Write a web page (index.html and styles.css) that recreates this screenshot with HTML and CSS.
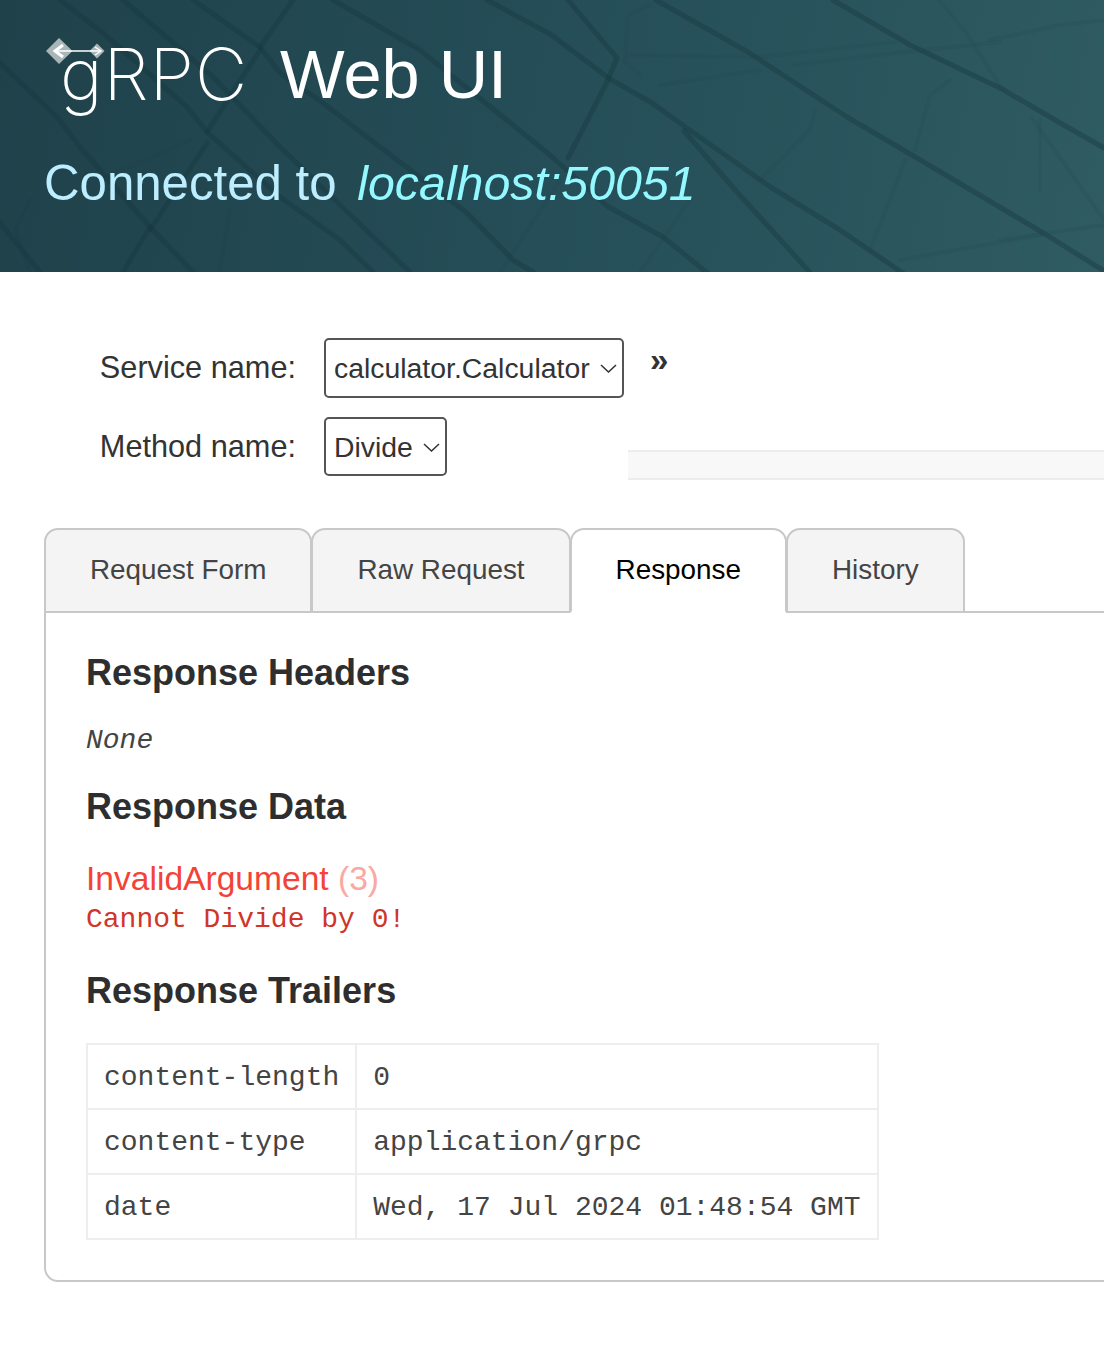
FILE: index.html
```html
<!DOCTYPE html>
<html lang="en">
<head>
<meta charset="utf-8">
<title>gRPC Web UI</title>
<link rel="stylesheet" href="styles.css">
</head>
<body>
<header class="hero">
  <svg class="hero-bg" viewBox="0 0 1104 272" preserveAspectRatio="none" aria-hidden="true">
    <g class="faint">
      <path d="M628 55 L760 57 L895 42"/>
      <path d="M795 65 L905 52 L1000 42"/>
      <path d="M628 15 L650 5 M628 15 L625 62 L640 75"/>
      <path d="M939 0 L967 34 L1002 89"/>
      <path d="M1031 117 L1104 220"/>
      <path d="M1000 240 L1104 225"/>
      <path d="M900 260 L1040 235"/>
      <path d="M870 250 L890 200 L905 160"/>
      <path d="M915 150 L930 95 L950 80"/>
      <path d="M990 40 L1060 25 L1104 20"/>
      <path d="M1040 120 L1040 190"/>
      <path d="M760 180 L810 130 L815 110"/>
      <path d="M660 85 L760 70"/>
      <path d="M100 180 L190 140"/>
      <path d="M30 200 L15 230 L30 272"/>
      <path d="M500 272 L560 180"/>
      <path d="M640 272 L690 200"/>
      <path d="M220 270 L230 210"/>
    </g>
    <g class="cracks">
      <path d="M487 0 L550 34 L610 79 L652 103 L691 131 L769 186 L840 230 L910 278"/>
      <path d="M656 0 L748 52 L847 117 L917 158 L1045 234 L1104 271"/>
      <path d="M833 0 L910 45 L1002 89 L1062 124 L1104 148"/>
      <path d="M333 0 L420 50 L550 155 L607 206 L663 237 L716 280"/>
      <path d="M568 0 L617 58 L607 82 L568 158"/>
      <path d="M684 131 L737 192 L815 278"/>
      <path d="M60 0 L103 33 L187 107 L207 132 L280 197 L340 240 L373 272"/>
      <path d="M123 0 L143 17 L213 77 L280 147 L363 227 L410 272"/>
      <path d="M193 0 L260 47 L280 73 L323 103 L380 147 L467 213 L513 260 L533 272"/>
      <path d="M260 47 L293 0"/>
      <path d="M260 50 L207 132"/>
      <path d="M0 63 L57 117 L80 147 L150 227 L193 272"/>
      <path d="M150 230 L207 143"/>
      <path d="M150 227 L123 272"/>
      <path d="M0 223 L40 272"/>
    </g>
  </svg>
  <div class="hero-title">
    <div class="logo">
      <svg class="logo-mark" viewBox="0 0 60 28" aria-hidden="true">
        <path class="mark-back" d="M13 0 L26.500 13 L13 26 L0 13 Z"/>
        <path class="mark-back" d="M51 5.500 L58.500 13 L51 20.500 L43.500 13 Z"/>
        <path class="mark-line" d="M9 13 H55"/>
        <path class="mark-line heavy" d="M17 7 L9 13 L17 19"/>
        <path class="mark-line" d="M49 9 L55 13 L49 17"/>
      </svg>
      <span class="logo-text">gRPC</span>
    </div>
    <h1 class="app-name">Web UI</h1>
  </div>
  <h2 class="connection">Connected to <em class="target">localhost:50051</em></h2>
</header>

<main>
  <form class="selectors">
    <label class="field-label" for="service">Service name:</label>
    <div class="select-wrap">
      <select id="service" class="picker"><option>calculator.Calculator</option></select>
      <svg class="chevron" viewBox="0 0 17 9" aria-hidden="true"><path d="M1 1 L8.500 8 L16 1"/></svg>
    </div>
    <span class="expander">»</span>
    <label class="field-label" for="method">Method name:</label>
    <div class="select-wrap">
      <select id="method" class="picker"><option>Divide</option></select>
      <svg class="chevron" viewBox="0 0 17 9" aria-hidden="true"><path d="M1 1 L8.500 8 L16 1"/></svg>
    </div>
    <div class="description"></div>
  </form>

  <nav class="tabs">
    <a class="tab">Request Form</a>
    <a class="tab">Raw Request</a>
    <a class="tab active">Response</a>
    <a class="tab">History</a>
  </nav>

  <section class="panel">
    <h3 class="section-title first">Response Headers</h3>
    <p class="none">None</p>
    <h3 class="section-title">Response Data</h3>
    <div class="status">InvalidArgument <span class="status-code">(3)</span></div>
    <pre class="status-message">Cannot Divide by 0!</pre>
    <h3 class="section-title trailers">Response Trailers</h3>
    <table class="meta">
      <tr><td class="meta-name">content-length</td><td>0</td></tr>
      <tr><td class="meta-name">content-type</td><td>application/grpc</td></tr>
      <tr><td class="meta-name">date</td><td>Wed, 17 Jul 2024 01:48:54 GMT</td></tr>
    </table>
  </section>
</main>
</body>
</html>
```
FILE: styles.css
```css
* { box-sizing: border-box; }

html, body { margin: 0; background: #fff; }

body {
  font-family: "Liberation Sans", Arial, sans-serif;
  color: #333;
  height: 1358px;
  overflow: hidden;
}

.hero {
  position: relative;
  height: 272px;
  padding: 38px 0 0 44px;
  background: linear-gradient(100deg, #1f414a 0%, #254e58 50%, #2f5b62 100%);
  overflow: hidden;
}

.hero-bg {
  position: absolute;
  inset: 0;
  width: 100%;
  height: 100%;
}

.cracks path,
.faint path {
  fill: none;
  stroke-linejoin: round;
  stroke-linecap: round;
}

.cracks path {
  stroke: #17383f;
  stroke-opacity: .4;
  stroke-width: 5;
}

.faint path {
  stroke: #17383f;
  stroke-opacity: .08;
  stroke-width: 4;
}

.hero-title, .connection { position: relative; }

.hero-title {
  display: flex;
  align-items: flex-start;
  height: 76px;
}

.logo {
  position: relative;
  width: 236px;
  height: 76px;
  padding-left: 16px;
}

.logo-text {
  display: block;
  font-family: Inter, sans-serif;
  font-weight: 200;
  font-size: 72px;
  line-height: 72px;
  letter-spacing: 1px;
  color: #fff;
}

.logo-mark {
  position: absolute;
  left: 2px;
  top: 0;
  width: 60px;
  height: 28px;
}

.mark-back { fill: #a9b6b8; }
.mark-line { fill: none; stroke: #fff; stroke-width: 1.500; }
.mark-line.heavy { stroke-width: 3; }

.app-name {
  margin: 0;
  font-size: 68.500px;
  line-height: 74px;
  font-weight: 400;
  color: #fff;
}

.connection {
  margin: 41px 0 0;
  font-size: 49.200px;
  line-height: 56px;
  font-weight: 400;
  color: #bdeeff;
}

.target {
  margin-left: 7px;
  font-size: 48.300px;
  color: #94f8ff;
}

.selectors {
  display: grid;
  grid-template-columns: 324px 304px 1fr;
  grid-template-rows: 60px 59px;
  row-gap: 19px;
  padding-top: 66px;
}

.field-label {
  align-self: center;
  padding-right: 28px;
  text-align: right;
  font-size: 30.700px;
}

.select-wrap {
  position: relative;
  width: max-content;
}

.picker {
  appearance: none;
  display: block;
  height: 100%;
  padding: 0 32px 0 8px;
  border: 2px solid #555;
  border-radius: 5px;
  background: #fff;
  color: #333;
  font: 28.400px "Liberation Sans", Arial, sans-serif;
}

.chevron {
  position: absolute;
  right: 7px;
  top: 26px;
  width: 17px;
  height: 9px;
  pointer-events: none;
}

.chevron path { fill: none; stroke: #333; stroke-width: 1.500; }

.expander {
  padding: 0 0 0 22px;
  font-size: 33px;
  line-height: 44px;
  font-weight: 700;
}

.description {
  margin-top: 33px;
  height: 30px;
  background: #f8f8f8;
  border-top: 2px solid #ececec;
  border-bottom: 2px solid #ececec;
}

.tabs {
  display: flex;
  margin: 52px 0 0 44px;
  height: 85px;
  position: relative;
  z-index: 1;
}

.tab {
  margin-right: -1px;
  padding: 0 44px;
  line-height: 79px;
  font-size: 27.850px;
  color: #444;
  background: #f4f4f4;
  border: 2px solid #c8c8c8;
  border-radius: 14px 14px 0 0;
}

.tab.active {
  color: #000;
  background: #fff;
  border-bottom-color: #fff;
}

.panel {
  margin: -2px 0 0 44px;
  height: 671px;
  padding: 0 0 0 40px;
  border: 2px solid #c8c8c8;
  border-right: 0;
  border-radius: 0 0 0 14px;
}

.section-title {
  margin: 0;
  font-size: 36px;
  line-height: 42px;
  font-weight: 700;
  color: #2e2e2e;
}

.section-title.first { margin-top: 39px; }

.none {
  margin: 31px 0 0;
  font: italic 28px/32px "Liberation Mono", monospace;
  color: #444;
}

.section-title:not(.first) { margin-top: 29px; }

.status {
  margin-top: 31px;
  font-size: 33.600px;
  line-height: 40px;
  color: #f44336;
}

.status-code { color: #f9a9a2; }

.status-message {
  margin: 2px 0 0;
  font: 28px/38px "Liberation Mono", monospace;
  color: #d0352a;
}

.section-title.trailers { margin-top: 31px; }

.meta {
  margin-top: 31px;
  border-collapse: collapse;
  font: 28px/32px "Liberation Mono", monospace;
  color: #444;
}

.meta td {
  height: 65px;
  padding: 2px 16px 0;
  border: 2px solid #eee;
}
```
